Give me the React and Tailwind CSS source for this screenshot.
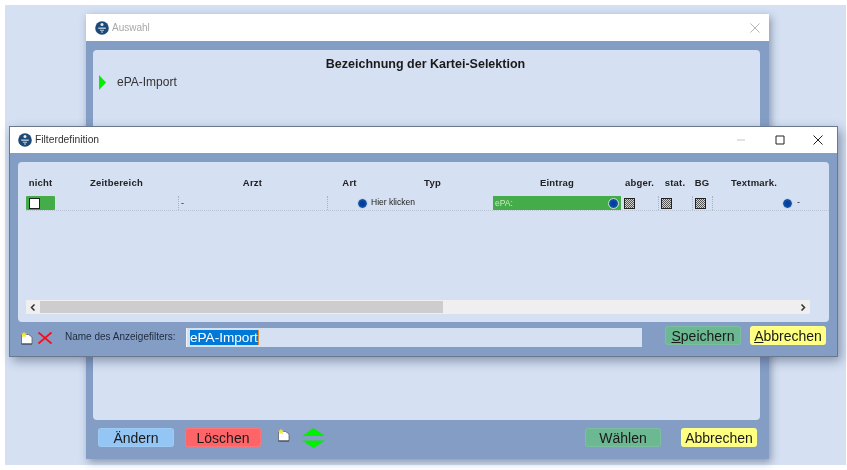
import React from 'react';

const FONT = "font-['Liberation_Sans',Arial,sans-serif]";
const COLS = 'grid grid-cols-[29px_123px_149px_45px_121px_128px_37px_34px_20px_84px_14px]';

const AppIcon = () => (
  <svg width="14" height="14" viewBox="0 0 14 14" className="shrink-0">
    <circle cx="7" cy="7" r="6.8" fill="#1c4a78" />
    <circle cx="7" cy="3.6" r="1.5" fill="#e6edf5" />
    <path d="M3.2 6.6h7.6v1.1H3.2z" fill="#e6edf5" />
    <path d="M5 8.8h4v1H5zM6 10.6h2v1H6z" fill="#c3d2e4" />
  </svg>
);

const NewDocIcon = () => (
  <svg width="14" height="14" viewBox="0 0 14 14" className="shrink-0">
    <path d="M1.5 3.5h7l3.5 2.5v7h-10.5z" fill="#fff" stroke="#5a6170" strokeWidth="0.8" />
    <path d="M1.5 13h10.5" stroke="#3a4050" strokeWidth="1" />
    <path d="M4 0.5l0.9 2 2.1 0.3-1.5 1.4 0.4 2.1-1.9-1-1.9 1 0.4-2.1-1.5-1.4 2.1-0.3z" fill="#f7e62a" />
  </svg>
);

const Dot = () => (
  <span className="size-[9px] shrink-0 rounded-full bg-[#0a3aa8] border-2 border-[#0b50a0] outline outline-1 outline-[#c9d6e6]" />
);

const Dither = () => (
  <span className="size-[11px] shrink-0 border border-[#222] bg-[repeating-conic-gradient(#555_0_25%,#d4d4d4_0_50%)] bg-[length:2px_2px]" />
);

const Btn = ({ color, children, className = '' }) => (
  <button className={`w-[76px] h-[19px] rounded-[3px] border border-white/10 flex items-center justify-center text-[14px] leading-none text-[#1a1a1a] ${color} ${className}`}>
    {children}
  </button>
);

const HeadCell = ({ children }) => (
  <div className="text-center text-[9.5px] font-bold tracking-[0.2px] text-[#222] whitespace-nowrap">{children}</div>
);

const BackWindow = () => (
  <div className="absolute left-[86px] top-[14px] w-[683px] h-[445px] flex flex-col bg-[#849dc5] shadow-[2px_3px_8px_rgba(40,55,85,0.45)]">
    <div className="h-[27px] shrink-0 bg-white flex items-center pl-[9px] pr-[9px] gap-[3px]">
      <AppIcon />
      <span className="text-[10px] text-[#a9a9a9] flex-1">Auswahl</span>
      <svg width="10" height="10" viewBox="0 0 10 10">
        <path d="M0.5 0.5l9 9M9.5 0.5l-9 9" stroke="#b5b5b5" strokeWidth="1" fill="none" />
      </svg>
    </div>
    <div className="ml-[7px] mt-[9px] mr-[9px] h-[370px] shrink-0 bg-[#d5e0f3] rounded-[4px] pt-[6px] flex flex-col">
      <div className="text-center text-[12.5px] leading-[16px] font-bold text-[#1a1a1a] pr-[2px]">Bezeichnung der Kartei-Selektion</div>
      <div className="flex items-center mt-[2px] pl-[6px] h-[16px]">
        <svg width="7" height="15" viewBox="0 0 7 15" className="shrink-0">
          <path d="M0 0l7 7.5-7 7.5z" fill="#00f000" />
        </svg>
        <span className="ml-[11px] text-[12px] text-[#333]">ePA-Import</span>
      </div>
    </div>
    <div className="flex items-center h-[19px] mt-[8px] pl-[12px] pr-[12px]">
      <Btn color="bg-[#93c5f5]">Ändern</Btn>
      <Btn color="bg-[#ff6468] ml-[11px]">Löschen</Btn>
      <span className="ml-[16px] -mt-[6px]"><NewDocIcon /></span>
      <svg width="23" height="20" viewBox="0 0 23 20" className="ml-[11px] shrink-0">
        <path d="M11.5 0l11.5 8h-23zM0 12.5h23l-11.5 7.5z" fill="#00f000" />
      </svg>
      <Btn color="bg-[#6bb893] ml-auto">Wählen</Btn>
      <Btn color="bg-[#ffff80] border-[#f4f4a0] ml-[20px]">Abbrechen</Btn>
    </div>
  </div>
);

const FilterTable = () => (
  <div className="flex-1 flex flex-col pl-[8px] pt-[14px]">
    <div className={`${COLS} h-[12px] items-center`}>
      <HeadCell>nicht</HeadCell>
      <HeadCell>Zeitbereich</HeadCell>
      <HeadCell>Arzt</HeadCell>
      <HeadCell>Art</HeadCell>
      <HeadCell>Typ</HeadCell>
      <HeadCell>Eintrag</HeadCell>
      <HeadCell>abger.</HeadCell>
      <HeadCell>stat.</HeadCell>
      <HeadCell>BG</HeadCell>
      <HeadCell>Textmark.</HeadCell>
      <div />
    </div>
    <div className={`${COLS} h-[15px] mt-[8px] border-b border-dotted border-[#b9c3d2] text-[#222] items-stretch`}>
      <div className="bg-[#44ad4a] flex items-center pl-[3px] rounded-[1px]">
        <span className="size-[11px] bg-white border-[1.5px] border-[#222]" />
      </div>
      <div />
      <div className="border-l border-dotted border-[#a8b2c2] pl-[2px] text-[9px] leading-[14px]">-</div>
      <div className="border-l border-dotted border-[#a8b2c2] flex items-center justify-end pr-[5px]"><Dot /></div>
      <div className="text-[8.5px] leading-[12px] whitespace-nowrap -ml-[1px]">Hier klicken</div>
      <div className="bg-[#44ad4a] flex items-center justify-between pl-[2px] pr-[3px] text-[8.5px] text-[#cfe8c8]">
        ePA:
        <Dot />
      </div>
      <div className="flex items-center pl-[3px]"><Dither /></div>
      <div className="border-l border-dotted border-[#a8b2c2] flex items-center pl-[2px]"><Dither /></div>
      <div className="border-l border-dotted border-[#a8b2c2] flex items-center pl-[2px]"><Dither /></div>
      <div className="border-l border-dotted border-[#a8b2c2] flex items-center justify-end pr-[4px]"><Dot /></div>
      <div className="pl-[1px] text-[9px] leading-[13px]">-</div>
    </div>
    <div className="mt-auto mb-[8px] w-[784px] h-[14px] bg-[#efefef] flex items-center">
      <div className="w-[14px] flex justify-center">
        <svg width="6" height="7" viewBox="0 0 6 7">
          <path d="M4.5 0.5L1.5 3.5l3 3" stroke="#333" strokeWidth="1.5" fill="none" />
        </svg>
      </div>
      <div className="w-[403px] h-[12px] bg-[#cdcdcd]" />
      <div className="ml-auto w-[14px] flex justify-center">
        <svg width="6" height="7" viewBox="0 0 6 7">
          <path d="M1.5 0.5l3 3-3 3" stroke="#333" strokeWidth="1.5" fill="none" />
        </svg>
      </div>
    </div>
  </div>
);

const FrontWindow = () => (
  <div className="absolute left-[9px] top-[126px] w-[829px] h-[231px] flex flex-col bg-[#849dc5] border border-[#6a788e] shadow-[3px_4px_10px_rgba(40,55,85,0.45)]">
    <div className="h-[26px] shrink-0 bg-white flex items-center pl-[8px] gap-[3px]">
      <AppIcon />
      <span className="text-[10.3px] text-[#333] flex-1">Filterdefinition</span>
      <svg width="10" height="10" viewBox="0 0 10 10" className="mr-[26px]">
        <path d="M1 5h8" stroke="#c4c4c4" strokeWidth="1" />
      </svg>
      <svg width="10" height="10" viewBox="0 0 10 10" className="mr-[25px]">
        <path d="M1 1h8v8h-8z" stroke="#222" strokeWidth="1" fill="none" />
      </svg>
      <svg width="10" height="10" viewBox="0 0 10 10" className="mr-[14px]">
        <path d="M0.5 0.5l9 9M9.5 0.5l-9 9" stroke="#222" strokeWidth="1" fill="none" />
      </svg>
    </div>
    <div className="ml-[8px] mr-[8px] mt-[9px] h-[160px] shrink-0 bg-[#d5e0f3] rounded-[4px] flex">
      <FilterTable />
    </div>
    <div className="flex items-start pl-[10px] flex-1">
      <span className="mt-[9px]"><NewDocIcon /></span>
      <svg width="14" height="12" viewBox="0 0 14 12" className="ml-[4px] mt-[10px] shrink-0">
        <path d="M0.5 0.5l13 11M13.5 0.5l-13 11" stroke="#ff0a14" strokeWidth="1.8" fill="none" />
      </svg>
      <span className="ml-[13px] mt-[9px] text-[10px] leading-[12px] text-[#1f2a3c] w-[121px] whitespace-nowrap">Name des Anzeigefilters:</span>
      <div className="mt-[6px] w-[456px] h-[19px] bg-[#d5e0f3] border-l border-[#eef3fb] flex items-center pl-[3px]">
        <span className="bg-[#0078d7] text-white text-[13.6px] leading-[15px]">ePA-Import</span>
        <span className="w-px h-[15px] bg-[#e08a3c]" />
      </div>
      <Btn color="bg-[#6bb893] mt-[4px] ml-[23px]"><span><u>S</u>peichern</span></Btn>
      <Btn color="bg-[#ffff80] border-[#f4f4a0] mt-[4px] ml-[9px]"><span><u>A</u>bbrechen</span></Btn>
    </div>
  </div>
);

const App = () => (
  <div className={`relative w-[847px] h-[470px] overflow-hidden bg-white blur-[0.35px] ${FONT}`}>
    <div className="absolute left-[5px] top-[5px] w-[841px] h-[460px] bg-[#d5e0f3]" />
    <BackWindow />
    <FrontWindow />
  </div>
);

export default App;
